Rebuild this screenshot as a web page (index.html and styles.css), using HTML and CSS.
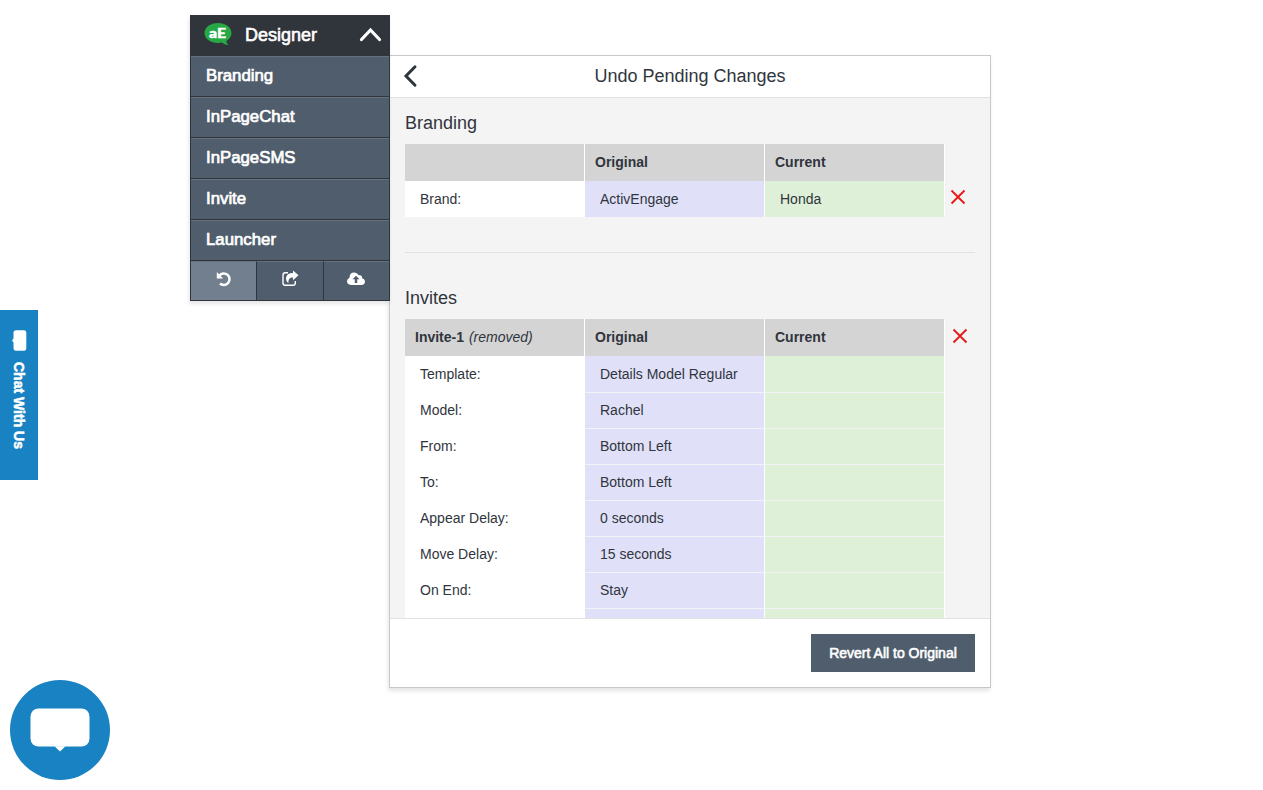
FILE: index.html
```html
<!DOCTYPE html>
<html lang="en">
<head>
<meta charset="utf-8">
<title>Designer</title>
<link rel="stylesheet" href="styles.css">
</head>
<body>
<div class="workspace">
  <nav class="menu">
    <header class="menu-head">
      <svg class="logo" width="28" height="24" viewBox="0 0 28 24">
        <path fill="#28a745" d="M14 0C6.500 0 .5 4.200.5 10S6.500 20 14 20q2 0 3.700-.4Q20 22 24.500 22.200 22 20 22.500 17.700 27.500 15 27.500 10C27.500 4.200 21.500 0 14 0Z"/>
        <text class="logo-text" x="13.500" y="14.800" text-anchor="middle" textLength="17" lengthAdjust="spacingAndGlyphs">aE</text>
      </svg>
      <span class="brand">Designer</span>
      <svg class="chevron" width="24" height="16" viewBox="0 0 24 16"><path d="M3.500 12.500 12.500 3 21.500 12.500"/></svg>
    </header>
    <a class="item">Branding</a>
    <a class="item">InPageChat</a>
    <a class="item">InPageSMS</a>
    <a class="item">Invite</a>
    <a class="item">Launcher</a>
    <div class="tools">
      <a class="tool active"><svg width="16" height="16" viewBox="0 0 16 16"><path class="line" d="M3.300 4.800A5.700 5.700 0 1 1 4 12.500"/><path class="solid" d="M.8 1v6.400h6.400Z"/></svg></a>
      <a class="tool"><svg width="17" height="16" viewBox="0 0 17 16"><path class="thin" d="M6 1.800H3.300Q1 1.800 1 4V12Q1 14.200 3.300 14.200H11Q13.300 14.200 13.300 12V10"/><path class="solid" d="M11 -.6 16.500 4.200 11 9.200V6.600C7.500 6.600 6.500 8 6.300 12.200 2.500 8.500 3.200 1.900 11 1.900Z"/></svg></a>
      <a class="tool"><svg width="20" height="16" viewBox="0 0 18 16"><path class="solid" fill-rule="evenodd" d="M4 14Q0 13.600 0 10.300 0 7.800 2.500 6.800 2.500 1.600 7.300 1.500 10.300 1.500 11.700 4.300 15.200 3.500 15.200 7.200 18 8 18 10.600 17.800 14 14.500 14ZM9 4.700 5.500 8.300H7.800V12H10.200V8.300H12.500Z"/></svg></a>
    </div>
  </nav>
  <main class="panel">
    <header class="panel-head">
      <svg class="back" width="15" height="24" viewBox="0 0 15 24"><path d="M12 2.800 3 12 12 21.200"/></svg>
      <h1 class="panel-title">Undo Pending Changes</h1>
    </header>
    <div class="content">
      <section class="group">
        <h2 class="title">Branding</h2>
        <div class="record">
          <div class="table">
            <div class="row head"><b></b><b>Original</b><b>Current</b></div>
            <div class="row"><span>Brand:</span><span class="old">ActivEngage</span><span class="new">Honda</span></div>
          </div>
          <svg class="remove on-row" width="16" height="16" viewBox="0 0 16 16"><path d="M1.500 1.500l13 13m0-13l-13 13"/></svg>
        </div>
      </section>
      <section class="group">
        <h2 class="title">Invites</h2>
        <div class="record">
          <div class="table">
            <div class="row head"><b>Invite-1 <i>(removed)</i></b><b>Original</b><b>Current</b></div>
            <div class="row"><span>Template:</span><span class="old">Details Model Regular</span><span class="new"></span></div>
            <div class="row"><span>Model:</span><span class="old">Rachel</span><span class="new"></span></div>
            <div class="row"><span>From:</span><span class="old">Bottom Left</span><span class="new"></span></div>
            <div class="row"><span>To:</span><span class="old">Bottom Left</span><span class="new"></span></div>
            <div class="row"><span>Appear Delay:</span><span class="old">0 seconds</span><span class="new"></span></div>
            <div class="row"><span>Move Delay:</span><span class="old">15 seconds</span><span class="new"></span></div>
            <div class="row"><span>On End:</span><span class="old">Stay</span><span class="new"></span></div>
            <div class="row"><span></span><span class="old"></span><span class="new"></span></div>
          </div>
          <svg class="remove on-head" width="16" height="16" viewBox="0 0 16 16"><path d="M1.500 1.500l13 13m0-13l-13 13"/></svg>
        </div>
      </section>
    </div>
    <footer class="panel-foot"><button class="revert">Revert All to Original</button></footer>
  </main>
</div>
<a class="chat-tab">
  <svg width="15" height="22" viewBox="0 0 15 22"><path fill="#fff" d="M4 .3H12Q14.300.3 14.300 3V18Q14.300 20.700 12 20.700H4Q1.500 20.700 1.500 18V12.500L0 10.500 1.500 8.500V3Q1.500.3 4 .3Z"/></svg>
  <span class="chat-label">Chat With Us</span>
</a>
<a class="chat-bubble">
  <svg width="100" height="100" viewBox="0 0 100 100"><rect x="20.500" y="28.500" width="59" height="38" rx="8" fill="#fff"/><path fill="#fff" d="M44.500 66.300h11L50 71.500Z"/></svg>
</a>
</body>
</html>
```
FILE: styles.css
```css
* { box-sizing: border-box; }
body {
  margin: 0;
  height: 790px;
  overflow: hidden;
  background: #fff;
  color: #30353d;
  font-family: "Liberation Sans", Arial, sans-serif;
}
svg { display: block; flex: none; overflow: visible; }
.workspace {
  display: flex;
  align-items: flex-start;
  padding: 15px 0 0 190px;
}
.menu {
  position: relative;
  z-index: 1;
  width: 200px;
  height: 286px;
  border: 1px solid #30343b;
  border-top: 0;
  background: #505d6c;
  color: #fff;
  box-shadow: -1px 3px 4px rgba(0, 0, 0, .1);
}
.menu-head {
  display: flex;
  align-items: center;
  height: 41px;
  padding: 0 7px 1px 13px;
  background: #30343b;
}
.logo-text {
  fill: #fff;
  stroke: #fff;
  stroke-width: .4;
  font: 900 14px Lato, sans-serif;
}
.brand {
  flex: 1;
  margin-left: 13px;
  font-size: 18px;
  -webkit-text-stroke: .6px #fff;
}
.chevron path {
  fill: none;
  stroke: #fff;
  stroke-width: 3.2;
  stroke-linecap: round;
}
.item {
  display: block;
  height: 41px;
  padding-left: 15px;
  border-top: 1px solid #657180;
  border-bottom: 1px solid #30343b;
  font-size: 16.8px;
  line-height: 38px;
  -webkit-text-stroke: .7px #fff;
}
.tools {
  display: grid;
  grid-template-columns: 66px 67px 65px;
  height: 39px;
}
.tool {
  display: flex;
  justify-content: center;
  padding-top: 9px;
  border-top: 1px solid #657180;
  border-right: 1px solid #30343b;
}
.tool:last-child { border-right: 0; padding-right: 2px; }
.tool.active { background: #717f8e; }
.solid { fill: #fff; }
.line, .thin { fill: none; stroke: #fff; stroke-width: 2.5; }
.thin { stroke-width: 1.4; }
.panel {
  display: flex;
  flex-direction: column;
  width: 602px;
  height: 633px;
  margin: 40px 0 0 -1px;
  border: 1px solid #c6c8ca;
  background: #fff;
  box-shadow: -1px 3px 4px rgba(0, 0, 0, .1);
}
.panel-head {
  display: flex;
  align-items: center;
  height: 42px;
  padding: 0 28px 1px 13px;
  border-bottom: 1px solid #e1e1e2;
}
.back path { fill: none; stroke: #30353d; stroke-width: 3; stroke-linecap: round; }
.panel-title {
  flex: 1;
  margin: 0;
  font-size: 18px;
  font-weight: normal;
  text-align: center;
}
.content {
  flex: 1;
  min-height: 0;
  overflow: hidden;
  padding: 0 15px;
  background: #f4f4f4;
}
.group + .group {
  margin-top: 35px;
  padding-top: 20px;
  border-top: 1px solid #e1e2e2;
}
.title {
  margin: 0;
  height: 46px;
  font-size: 18px;
  font-weight: normal;
  line-height: 50px;
}
.record { display: flex; }
.row {
  display: grid;
  grid-template-columns: repeat(3, 180px);
  height: 36px;
  font-size: 14px;
  line-height: 36px;
}
.row span {
  padding-left: 15px;
  border-right: 1px solid #fff;
  background: #fff;
  white-space: nowrap;
}
.row + .row:not(.head + .row) span { line-height: 35px; border-top: 1px solid #f1f4f7; }
.row + .row:not(.head + .row) span:first-child { border-top-color: #fff; }
.row .old { background: #e0e1f8; }
.row .new { background: #def0d8; }
.row.head { height: 37px; }
.row b {
  padding-left: 10px;
  border-right: 1px solid #fff;
  background: #d4d4d4;
}
.row i { margin-left: 1px; font-weight: normal; }
.remove path { stroke: #ec1515; stroke-width: 1.8; }
.on-row { margin: 45px 0 0 5px; }
.on-head { margin: 9px 0 0 7px; }
.panel-foot {
  display: flex;
  justify-content: flex-end;
  height: 69px;
  padding: 15px 15px 0 0;
  border-top: 1px solid #e1e1e2;
}
.revert {
  width: 164px;
  height: 38px;
  padding: 0;
  border: 0;
  background: #505d6c;
  color: #fff;
  font: 14px "Liberation Sans", Arial, sans-serif;
  -webkit-text-stroke: .6px #fff;
}
.chat-tab {
  position: fixed;
  left: 0;
  top: 310px;
  display: flex;
  flex-direction: column;
  align-items: center;
  width: 38px;
  height: 170px;
  padding-top: 20px;
  background: #1982c2;
  color: #fff;
}
.chat-label {
  margin-top: 10px;
  font-size: 14px;
  font-weight: bold;
  -webkit-text-stroke: .5px #fff;
  writing-mode: vertical-rl;
}
.chat-bubble {
  position: fixed;
  left: 10px;
  top: 680px;
  width: 100px;
  height: 100px;
  border-radius: 50%;
  background: #1982c2;
}
```
